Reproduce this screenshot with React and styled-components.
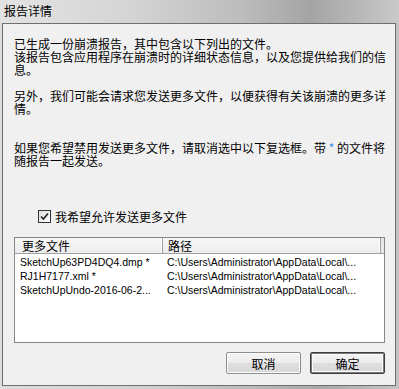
import React from "react";
import styled, { createGlobalStyle } from "styled-components";

const CJK = `"Noto Sans CJK SC", "Noto Sans", sans-serif`;
const UI = `"Liberation Sans", "Noto Sans CJK SC", sans-serif`;

const Global = createGlobalStyle`
  html, body { margin: 0; padding: 0; background: #cfcfcf; }
  * { box-sizing: border-box; }
`;

const Window = styled.div`
  width: 399px;
  height: 389px;
  display: flex;
  flex-direction: column;
  background: linear-gradient(to right, #dcdcdc 0%, #d2d2d2 35%, #b8b8b8 65%, #a9a9a9 80%, #c4c4c4 100%);
  font-family: ${CJK};
  overflow: hidden;
`;

const TitleBar = styled.div`
  height: 23px;
  flex: none;
  display: flex;
  align-items: center;
  padding: 0 0 3px 4px;
  font-size: 12px;
  color: #000;
  background: linear-gradient(to right, #e3e3e3 0%, #d6d6d6 30%, #bdbdbd 60%, #a4a4a4 78%, #c9c9c9 100%);
`;

const Client = styled.div`
  flex: 1;
  margin: 0 3px 3px 2px;
  border: 1px solid #6f6f6f;
  background: #f0f0f0;
  display: flex;
  flex-direction: column;
  padding: 13px 9px 0 11px;
`;

const Message = styled.div`
  font-size: 12px;
  line-height: 13px;
  color: #000;
  white-space: nowrap;
`;

const Star = styled.span`
  color: #3a8ee6;
`;

const CheckRow = styled.label`
  display: flex;
  align-items: center;
  gap: 4px;
  height: 13px;
  margin-top: 43px;
  padding-left: 24px;
  font-size: 12px;
  color: #000;
`;

const Box = styled.span`
  width: 13px;
  height: 13px;
  flex: none;
  border: 1px solid #333;
  background: linear-gradient(135deg, #dcdcdc, #ffffff);
  display: flex;
  align-items: center;
  justify-content: center;
`;

const List = styled.div`
  margin-top: 14px;
  width: 371px;
  height: 106px;
  border: 1px solid #828790;
  background: #fff;
  display: flex;
  flex-direction: column;
`;

const Header = styled.div`
  display: flex;
  height: 16px;
  flex: none;
  background: linear-gradient(#f7f7f7, #ececec);
  border-bottom: 1px solid #a0a0a0;
`;

const HeadCell = styled.div`
  width: ${(p) => p.$w}px;
  flex: none;
  font-size: 12px;
  line-height: 15px;
  padding-left: ${(p) => p.$pad}px;
  border-right: 1px solid #a0a0a0;
  box-shadow: inset -1px 0 0 #ffffff;
  white-space: nowrap;
  overflow: hidden;
`;

const HeadRest = styled.div`
  flex: 1;
  background: #e8e8e8;
`;

const Row = styled.div`
  display: flex;
  height: 14px;
  margin-top: ${(p) => (p.$first ? 1 : 0)}px;
`;

const Cell = styled.div`
  width: ${(p) => p.$w}px;
  flex: none;
  font-family: ${UI};
  font-size: 10.5px;
  line-height: 14px;
  padding-left: ${(p) => p.$pad}px;
  color: #000;
  white-space: nowrap;
  overflow: hidden;
`;

const Buttons = styled.div`
  display: flex;
  justify-content: flex-end;
  gap: 9px;
  margin-top: 9px;
  width: 371px;
`;

const Button = styled.button`
  width: 75px;
  height: 22px;
  padding: 0;
  font-family: ${CJK};
  font-size: 12px;
  color: #000;
  border-radius: 2px;
  border: 1px solid ${(p) => (p.$default ? "#3c3c3c" : "#8e8e8e")};
  box-shadow: ${(p) =>
    p.$default ? "inset 0 0 0 1px #7a7a7a, inset 0 0 0 2px #fafafa" : "inset 0 0 0 1px #fcfcfc"};
  background: linear-gradient(#f4f4f4 0%, #ececec 50%, #dedede 51%, #d8d8d8 100%);
`;

const files = [
  ["SketchUp63PD4DQ4.dmp *", "C:\\Users\\Administrator\\AppData\\Local\\..."],
  ["RJ1H7177.xml *", "C:\\Users\\Administrator\\AppData\\Local\\..."],
  ["SketchUpUndo-2016-06-2...", "C:\\Users\\Administrator\\AppData\\Local\\..."],
];

export default function App() {
  return (
    <>
      <Global />
      <Window>
        <TitleBar>报告详情</TitleBar>
        <Client>
          <Message>
            已生成一份崩溃报告，其中包含以下列出的文件。
            <br />
            该报告包含应用程序在崩溃时的详细状态信息，以及您提供给我们的信
            <br />
            息。
            <br />
            <br />
            另外，我们可能会请求您发送更多文件，以便获得有关该崩溃的更多详
            <br />
            情。
            <br />
            <br />
            <br />
            如果您希望禁用发送更多文件，请取消选中以下复选框。带 <Star>*</Star> 的文件将
            <br />
            随报告一起发送。
          </Message>
          <CheckRow>
            <Box>
              <svg width="9" height="9" viewBox="0 0 9 9">
                <path d="M1 4.5 L3.4 7 L8 1.5" fill="none" stroke="#222" strokeWidth="1.6" />
              </svg>
            </Box>
            我希望允许发送更多文件
          </CheckRow>
          <List>
            <Header>
              <HeadCell $w={148} $pad={7}>更多文件</HeadCell>
              <HeadCell $w={218} $pad={5}>路径</HeadCell>
              <HeadRest />
            </Header>
            {files.map(([name, path], i) => (
              <Row key={name} $first={i === 0}>
                <Cell $w={148} $pad={5}>{name}</Cell>
                <Cell $w={220} $pad={4}>{path}</Cell>
              </Row>
            ))}
          </List>
          <Buttons>
            <Button>取消</Button>
            <Button $default>确定</Button>
          </Buttons>
        </Client>
      </Window>
    </>
  );
}
